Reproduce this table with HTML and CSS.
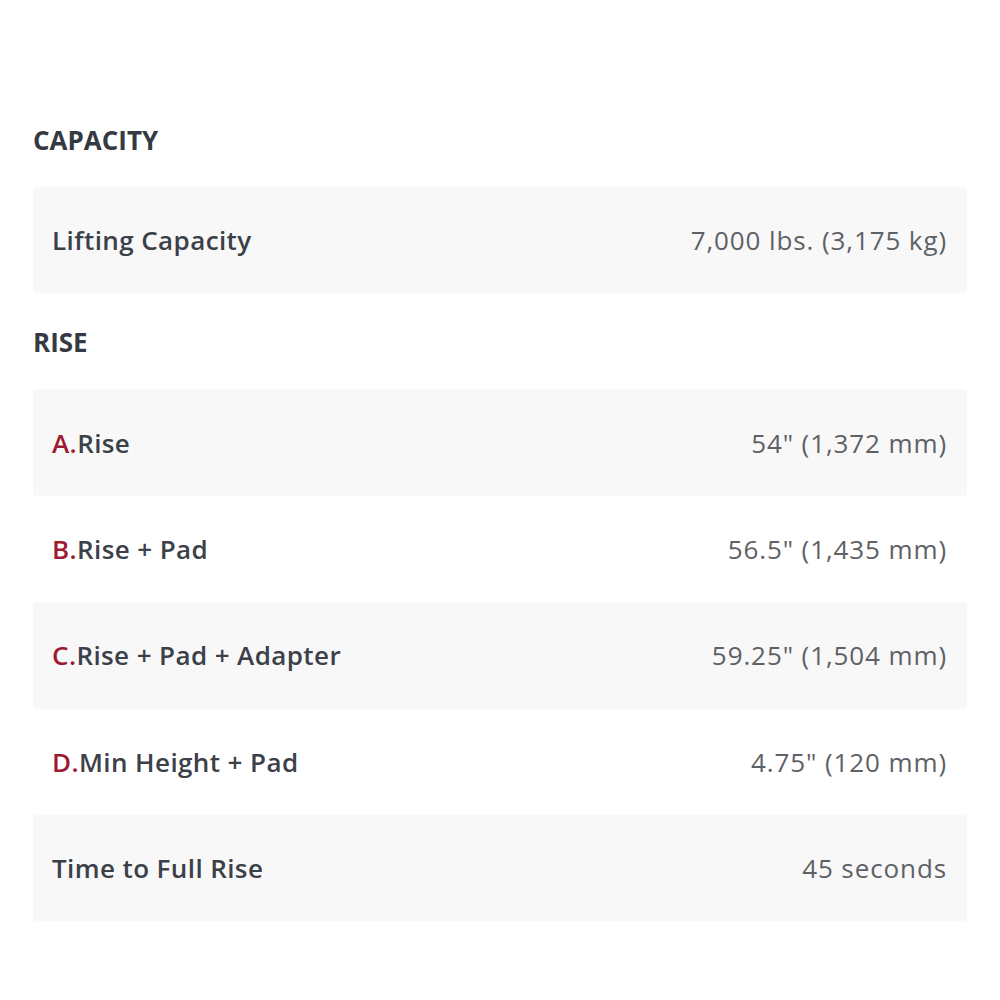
FILE: index.html
```html
<!DOCTYPE html>
<html lang="en">
<head>
<meta charset="utf-8">
<title>Specifications</title>
<link rel="stylesheet" href="styles.css">
</head>
<body>
<main class="specs">
  <section class="group">
    <h3 class="group-title">CAPACITY</h3>
    <div class="rows">
      <div class="row"><span class="label">Lifting Capacity</span><span class="value">7,000 lbs. (3,175 kg)</span></div>
    </div>
  </section>
  <section class="group">
    <h3 class="group-title">RISE</h3>
    <div class="rows">
      <div class="row"><span class="label"><span class="key">A.</span>Rise</span><span class="value">54" (1,372 mm)</span></div>
      <div class="row"><span class="label"><span class="key">B.</span>Rise + Pad</span><span class="value">56.5" (1,435 mm)</span></div>
      <div class="row"><span class="label"><span class="key">C.</span>Rise + Pad + Adapter</span><span class="value">59.25" (1,504 mm)</span></div>
      <div class="row"><span class="label"><span class="key">D.</span>Min Height + Pad</span><span class="value">4.75" (120 mm)</span></div>
      <div class="row"><span class="label">Time to Full Rise</span><span class="value">45 seconds</span></div>
    </div>
  </section>
</main>
</body>
</html>
```

FILE: styles.css
```css
html, body {
  margin: 0;
  padding: 0;
  background: #ffffff;
}
body {
  font-family: "Open Sans", "Liberation Sans", sans-serif;
  color: #3b4049;
}
.specs {
  width: 934px;
  margin-left: 33px;
  padding-top: 120px;
}
.group-title {
  margin: 0 0 27px 0;
  height: 40px;
  line-height: 40px;
  font-size: 26px;
  font-weight: 700;
  color: #353a42;
}
.group + .group .group-title {
  margin-top: 29px;
}
.rows {
  display: flex;
  flex-direction: column;
}
.row {
  display: flex;
  justify-content: space-between;
  align-items: center;
  height: 106.4px;
  padding: 0 20px 0 19px;
  border-radius: 3px;
}
.row:nth-child(odd) {
  background: #f8f8f8;
}
.label {
  font-size: 26px;
  font-weight: 600;
  letter-spacing: 0.4px;
  color: #3b4049;
}
.key {
  color: #9e1a32;
}
.value {
  font-size: 26px;
  font-weight: 400;
  letter-spacing: 0.9px;
  color: #5e6166;
}
```
